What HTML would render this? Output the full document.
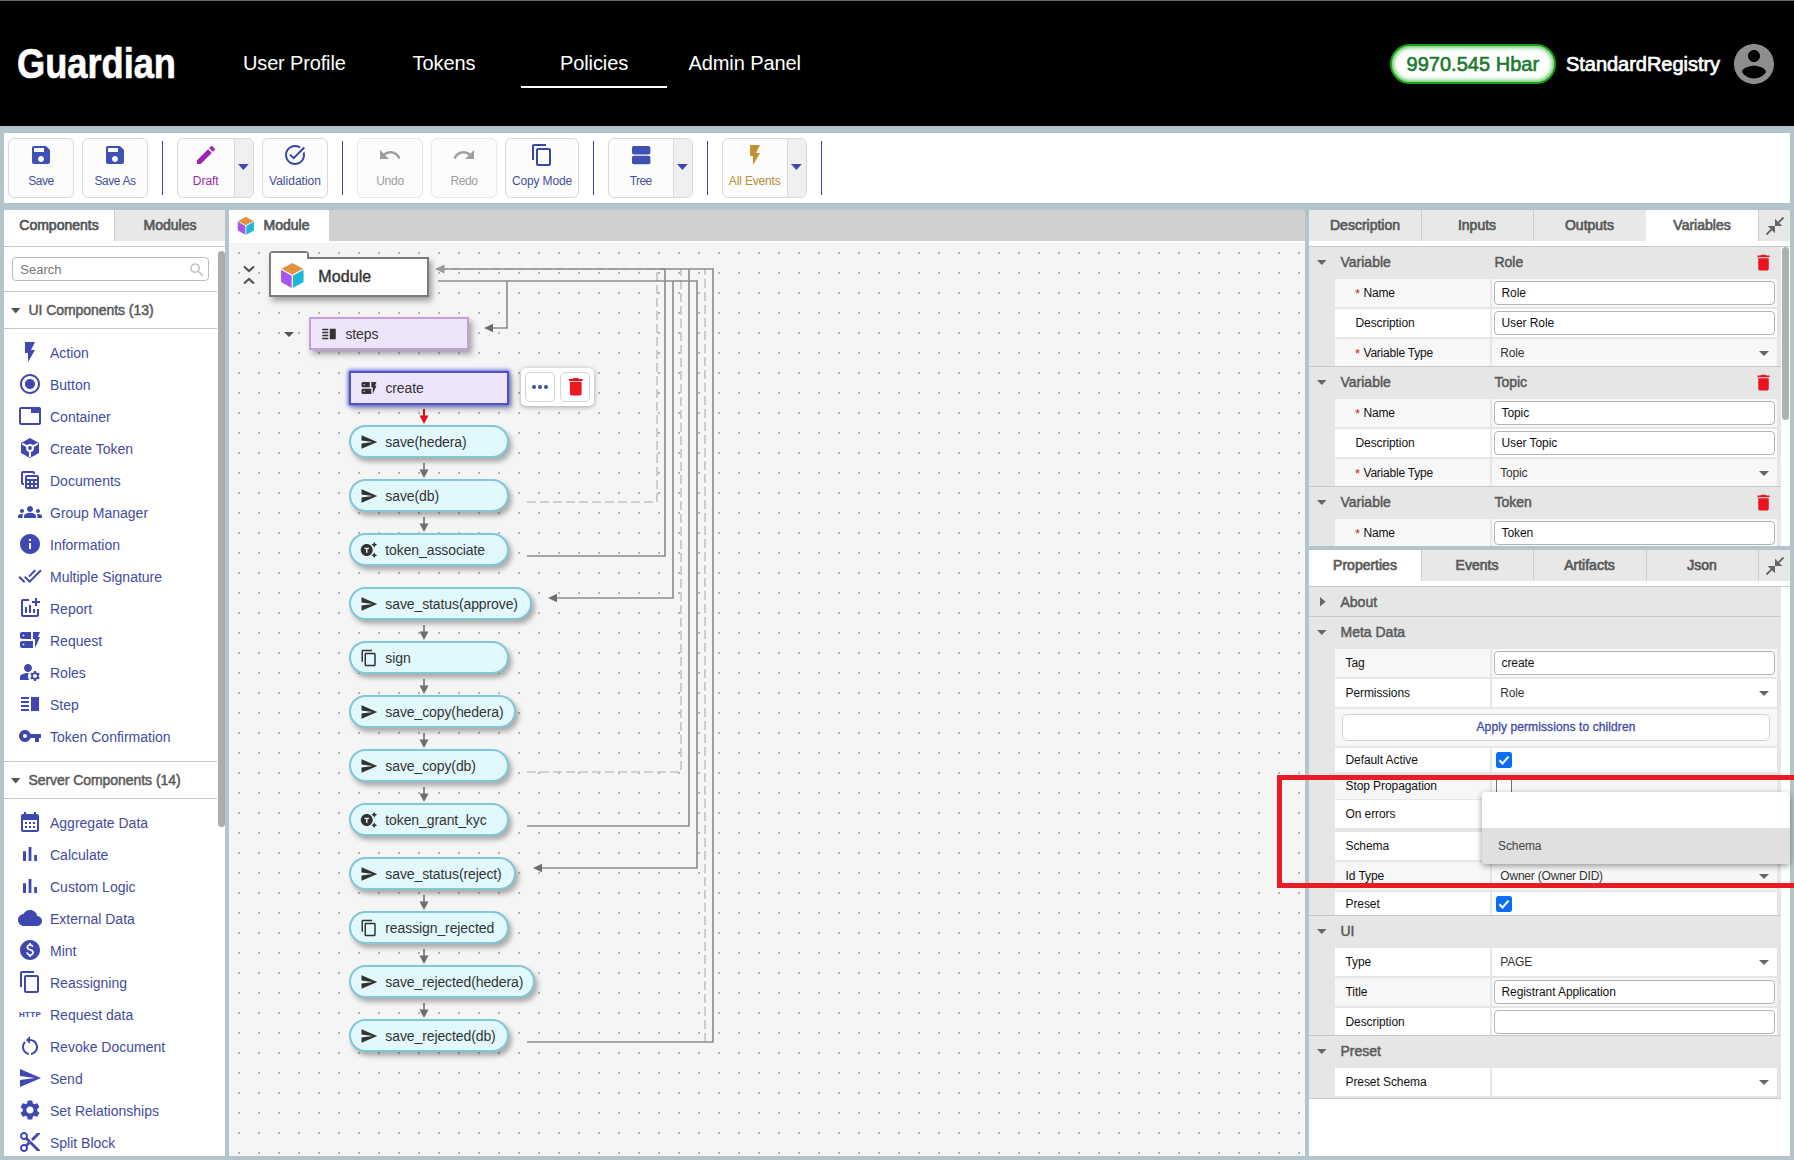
<!DOCTYPE html>
<html><head><meta charset="utf-8"><title>Guardian</title>
<style>
html,body{margin:0;padding:0}
body{width:1794px;height:1160px;position:relative;overflow:hidden;background:#b3c4cb;font-family:"Liberation Sans", sans-serif}
body div,body svg,.t{position:absolute}
.t{white-space:nowrap}
svg{display:block;overflow:visible}
</style></head><body>
<div style="left:0px;top:0px;width:1794px;height:126px;background:#000"></div>
<div style="left:0px;top:0px;width:1794px;height:1px;background:#6c6c70"></div>
<span class="t" style="top:40px;font-size:42.5px;line-height:47px;color:#fff;font-weight:bold;-webkit-text-stroke:0.7px #fff;transform:scaleX(0.852);transform-origin:0 0;left:17px;">Guardian</span>
<span class="t" style="top:52px;font-size:20px;line-height:22px;color:#fff;letter-spacing:-0.15px;left:243px;">User Profile</span>
<span class="t" style="top:52px;font-size:20px;line-height:22px;color:#fff;letter-spacing:-0.1px;left:412.6px;">Tokens</span>
<span class="t" style="top:52px;font-size:20px;line-height:22px;color:#fff;letter-spacing:-0.1px;left:560px;">Policies</span>
<span class="t" style="top:52px;font-size:20px;line-height:22px;color:#fff;letter-spacing:-0.1px;left:688.5px;">Admin Panel</span>
<div style="left:521px;top:86px;width:146px;height:2px;background:#fff"></div>
<div style="left:1390px;top:44px;width:166px;height:40px;box-sizing:border-box;border:2px solid #15a215;border-radius:20px;background:#fff;box-shadow:inset 0 0 5px 1px #3db83d"></div>
<span class="t" style="top:53px;font-size:20px;line-height:22px;color:#1b7a2e;letter-spacing:0.03px;-webkit-text-stroke:0.6px #1b7a2e;left:1406.5px;">9970.545 Hbar</span>
<span class="t" style="top:53px;font-size:20px;line-height:22px;color:#fff;letter-spacing:-0.03px;-webkit-text-stroke:0.7px #fff;left:1566px;">StandardRegistry</span>
<svg style="left:1730px;top:40px;" width="48" height="48" viewBox="0 0 24 24"><path fill="#8e8e8e" d="M12 2C6.480 2 2 6.480 2 12s4.480 10 10 10 10-4.480 10-10S17.520 2 12 2zm0 3c1.660 0 3 1.340 3 3s-1.340 3-3 3-3-1.340-3-3 1.340-3 3-3zm0 14.200c-2.500 0-4.710-1.280-6-3.220.030-1.990 4-3.080 6-3.080 1.990 0 5.970 1.090 6 3.080-1.290 1.940-3.500 3.220-6 3.220z"/></svg>
<div style="left:4px;top:133px;width:1786px;height:70px;background:#fff"></div>
<div style="left:8px;top:138px;width:66px;height:60px;box-sizing:border-box;border:1px solid #d9d9d9;border-radius:6px;background:#fcfcfc;overflow:hidden"></div>
<svg style="left:29.0px;top:143px;" width="24" height="24" viewBox="0 0 24 24"><path fill="#3f51b5" d="M17 3H5c-1.11 0-2 .9-2 2v14c0 1.1.89 2 2 2h14c1.1 0 2-.9 2-2V7l-4-4zm-5 16c-1.66 0-3-1.34-3-3s1.34-3 3-3 3 1.34 3 3-1.34 3-3 3zm3-10H5V5h10v4z"/></svg>
<span class="t" style="top:174px;font-size:12px;line-height:14px;color:#454e9c;letter-spacing:-0.45px;left:41.0px;transform:translateX(-50%);">Save</span>
<div style="left:82px;top:138px;width:66px;height:60px;box-sizing:border-box;border:1px solid #d9d9d9;border-radius:6px;background:#fcfcfc;overflow:hidden"></div>
<svg style="left:103.0px;top:143px;" width="24" height="24" viewBox="0 0 24 24"><path fill="#3f51b5" d="M17 3H5c-1.11 0-2 .9-2 2v14c0 1.1.89 2 2 2h14c1.1 0 2-.9 2-2V7l-4-4zm-5 16c-1.66 0-3-1.34-3-3s1.34-3 3-3 3 1.34 3 3-1.34 3-3 3zm3-10H5V5h10v4z"/></svg>
<span class="t" style="top:174px;font-size:12px;line-height:14px;color:#454e9c;letter-spacing:-0.41px;left:115.0px;transform:translateX(-50%);">Save As</span>
<div style="left:162px;top:141px;width:1.4px;height:54px;background:#3b4897"></div>
<div style="left:177px;top:138px;width:77px;height:60px;box-sizing:border-box;border:1px solid #d9d9d9;border-radius:6px;background:#fcfcfc;overflow:hidden"><div style="left:55.9px;top:0;width:19.5px;height:60px;background:#efefef;border-left:1px solid #d9d9d9"></div></div>
<svg style="left:193.75px;top:143px;" width="24" height="24" viewBox="0 0 24 24"><path fill="#9c27b0" d="M3 17.25V21h3.75L17.81 9.94l-3.75-3.75L3 17.25zM20.71 7.04c.39-.39.39-1.02 0-1.41l-2.34-2.34c-.39-.39-1.02-.39-1.41 0l-1.83 1.83 3.75 3.75 1.83-1.83z"/></svg>
<span class="t" style="top:174px;font-size:12px;line-height:14px;color:#9c2aa8;letter-spacing:-0.05px;left:205.75px;transform:translateX(-50%);">Draft</span>
<svg style="left:238.04999999999998px;top:164.2px;" width="10.8" height="6" viewBox="0 0 10.8 6"><path fill="#3f48b0" d="M0 0h10.8l-5.4 6z"/></svg>
<div style="left:262px;top:138px;width:66px;height:60px;box-sizing:border-box;border:1px solid #d9d9d9;border-radius:6px;background:#fcfcfc;overflow:hidden"></div>
<svg style="left:283.0px;top:143px;" width="24" height="24" viewBox="0 0 24 24"><path fill="#3848a4" d="M22 5.18L10.59 16.6l-4.24-4.24 1.41-1.41 2.83 2.83 10-10L22 5.18zm-2.21 5.04c.13.57.21 1.17.21 1.78 0 4.42-3.58 8-8 8s-8-3.58-8-8 3.58-8 8-8c1.58 0 3.04.46 4.28 1.25l1.44-1.44C16.1 2.67 14.13 2 12 2 6.48 2 2 6.48 2 12s4.48 10 10 10 10-4.48 10-10c0-1.19-.22-2.33-.6-3.39l-1.61 1.61z"/></svg>
<span class="t" style="top:174px;font-size:12px;line-height:14px;color:#454e9c;left:295.0px;transform:translateX(-50%);">Validation</span>
<div style="left:342px;top:141px;width:1.4px;height:54px;background:#3b4897"></div>
<div style="left:357px;top:138px;width:66px;height:60px;box-sizing:border-box;border:1px solid #e6e6e6;border-radius:6px;background:#fcfcfc;overflow:hidden"></div>
<svg style="left:378.0px;top:143px;" width="24" height="24" viewBox="0 0 24 24"><path fill="#9e9e9e" d="M12.5 8c-2.65 0-5.05.99-6.9 2.6L2 7v9h9l-3.62-3.62c1.39-1.16 3.16-1.88 5.12-1.88 3.54 0 6.55 2.31 7.6 5.5l2.37-.78C21.08 11.03 17.15 8 12.5 8z"/></svg>
<span class="t" style="top:174px;font-size:12px;line-height:14px;color:#9e9e9e;letter-spacing:-0.27px;left:390.0px;transform:translateX(-50%);">Undo</span>
<div style="left:431px;top:138px;width:66px;height:60px;box-sizing:border-box;border:1px solid #e6e6e6;border-radius:6px;background:#fcfcfc;overflow:hidden"></div>
<svg style="left:452.0px;top:143px;" width="24" height="24" viewBox="0 0 24 24"><path fill="#9e9e9e" d="M18.4 10.6C16.55 8.99 14.15 8 11.5 8c-4.65 0-8.58 3.03-9.96 7.22L3.9 16c1.05-3.19 4.05-5.5 7.6-5.5 1.95 0 3.73.72 5.12 1.88L13 16h9V7l-3.6 3.6z"/></svg>
<span class="t" style="top:174px;font-size:12px;line-height:14px;color:#9e9e9e;letter-spacing:-0.48px;left:464.0px;transform:translateX(-50%);">Redo</span>
<div style="left:505px;top:138px;width:74px;height:60px;box-sizing:border-box;border:1px solid #d9d9d9;border-radius:6px;background:#fcfcfc;overflow:hidden"></div>
<svg style="left:530.0px;top:143px;" width="24" height="24" viewBox="0 0 24 24"><path fill="#3848a4" d="M16 1H4c-1.1 0-2 .9-2 2v14h2V3h12V1zm3 4H8c-1.1 0-2 .9-2 2v14c0 1.1.9 2 2 2h11c1.1 0 2-.9 2-2V7c0-1.1-.9-2-2-2zm0 16H8V7h11v14z"/></svg>
<span class="t" style="top:174px;font-size:12px;line-height:14px;color:#454e9c;letter-spacing:-0.17px;left:542.0px;transform:translateX(-50%);">Copy Mode</span>
<div style="left:593px;top:141px;width:1.4px;height:54px;background:#3b4897"></div>
<div style="left:608px;top:138px;width:85px;height:60px;box-sizing:border-box;border:1px solid #d9d9d9;border-radius:6px;background:#fcfcfc;overflow:hidden"><div style="left:63.9px;top:0;width:19.5px;height:60px;background:#efefef;border-left:1px solid #d9d9d9"></div></div>
<svg style="left:631.55px;top:146.2px;" width="18.4" height="18.2" viewBox="0 0 18.4 18.2"><rect width="18.4" height="8.4" rx="2" fill="#3f51b5"/><rect y="9.8" width="18.4" height="8.4" rx="2" fill="#3f51b5"/></svg>
<span class="t" style="top:174px;font-size:12px;line-height:14px;color:#454e9c;letter-spacing:-0.6px;left:640.75px;transform:translateX(-50%);">Tree</span>
<svg style="left:677.0500000000001px;top:164.2px;" width="10.8" height="6" viewBox="0 0 10.8 6"><path fill="#3f48b0" d="M0 0h10.8l-5.4 6z"/></svg>
<div style="left:707px;top:141px;width:1.4px;height:54px;background:#3b4897"></div>
<div style="left:722px;top:138px;width:85px;height:60px;box-sizing:border-box;border:1px solid #d9d9d9;border-radius:6px;background:#fcfcfc;overflow:hidden"><div style="left:63.9px;top:0;width:19.5px;height:60px;background:#efefef;border-left:1px solid #d9d9d9"></div></div>
<svg style="left:742.75px;top:143px;" width="24" height="24" viewBox="0 0 24 24"><path fill="#c0912f" d="M7 2v11h3v9l7-12h-4l4-8z"/></svg>
<span class="t" style="top:174px;font-size:12px;line-height:14px;color:#b98d33;letter-spacing:-0.16px;left:754.75px;transform:translateX(-50%);">All Events</span>
<svg style="left:791.0500000000001px;top:164.2px;" width="10.8" height="6" viewBox="0 0 10.8 6"><path fill="#3f48b0" d="M0 0h10.8l-5.4 6z"/></svg>
<div style="left:821px;top:141px;width:1.4px;height:54px;background:#3b4897"></div>
<div style="left:4px;top:210px;width:221px;height:946px;background:#fff"></div>
<div style="left:114px;top:210px;width:111px;height:30.7px;background:#e8e8e8;border-left:1px solid #cfcfcf;box-sizing:border-box"></div>
<span class="t" style="top:217px;font-size:14px;line-height:16px;color:#555;-webkit-text-stroke:0.7px #555;left:59px;transform:translateX(-50%);">Components</span>
<span class="t" style="top:217px;font-size:14px;line-height:16px;color:#5a5a5a;-webkit-text-stroke:0.7px #5a5a5a;left:170px;transform:translateX(-50%);">Modules</span>
<div style="left:4px;top:246px;width:221px;height:1px;background:#c8c8c8"></div>
<div style="left:12px;top:257px;width:197px;height:24px;box-sizing:border-box;border:1px solid #bdbdbd;border-radius:4px;background:#fff"></div>
<span class="t" style="top:262px;font-size:13px;line-height:15px;color:#777;left:20.3px;">Search</span>
<svg style="left:188px;top:260.7px;" width="18" height="18" viewBox="0 0 24 24"><path fill="#c2c2c2" d="M15.500 14h-.790l-.280-.270C15.410 12.590 16 11.110 16 9.500 16 5.910 13.090 3 9.500 3S3 5.910 3 9.500 5.910 16 9.500 16c1.610 0 3.090-.590 4.230-1.570l.270.280v.790l5 4.990L20.490 19l-4.990-5zm-6 0C7.010 14 5 11.990 5 9.500S7.010 5 9.500 5 14 7.010 14 9.500 11.990 14 9.500 14z"/></svg>
<div style="left:4px;top:291px;width:213px;height:1px;background:#c8c8c8"></div>
<svg style="left:11.3px;top:307.9px;" width="9.4" height="5.6" viewBox="0 0 9.4 5.6"><path fill="#555" d="M0 0h9.4l-4.7 5.6z"/></svg>
<span class="t" style="top:302px;font-size:14px;line-height:16px;color:#5a5a5a;letter-spacing:-0.05px;-webkit-text-stroke:0.5px #5a5a5a;left:28.4px;">UI Components (13)</span>
<div style="left:4px;top:328px;width:213px;height:1px;background:#c8c8c8"></div>
<div style="left:217.5px;top:251px;width:7.3px;height:576px;background:#adadad;border-radius:4px"></div>
<svg style="left:18px;top:340px;" width="24" height="24" viewBox="0 0 24 24"><path fill="#3f48b0" d="M7 2v11h3v9l7-12h-4l4-8z"/></svg>
<span class="t" style="top:345px;font-size:14px;line-height:16px;color:#434b9f;left:50px;">Action</span>
<svg style="left:18px;top:372px;" width="24" height="24" viewBox="0 0 24 24"><path fill="#3f48b0" d="M12 7c-2.76 0-5 2.24-5 5s2.24 5 5 5 5-2.24 5-5-2.24-5-5-5zm0-5C6.48 2 2 6.48 2 12s4.48 10 10 10 10-4.480 10-10S17.520 2 12 2zm0 18c-4.420 0-8-3.580-8-8s3.580-8 8-8 8 3.580 8 8-3.580 8-8 8z"/></svg>
<span class="t" style="top:377px;font-size:14px;line-height:16px;color:#434b9f;left:50px;">Button</span>
<svg style="left:18px;top:404px;" width="24" height="24" viewBox="0 0 24 24"><path fill="#3f48b0" d="M21 3H3c-1.1 0-2 .9-2 2v14c0 1.1.9 2 2 2h18c1.1 0 2-.9 2-2V5c0-1.1-.9-2-2-2zm0 16H3V5h10v4h8v10z"/></svg>
<span class="t" style="top:409px;font-size:14px;line-height:16px;color:#434b9f;left:50px;">Container</span>
<svg style="left:18px;top:436px;" width="24" height="24" viewBox="0 0 24 24"><path fill="#3f48b0" d="M21 7l-9-5-9 5v10l9 5 9-5V7z"/><path d="M12 12 L4.2 7.65 M12 12 L19.8 7.65 M12 12 V21" stroke="#fff" stroke-width="2" fill="none"/><circle cx="12" cy="12" r="3.9" fill="#fff"/><circle cx="12" cy="12" r="1.9" fill="#3f48b0"/></svg>
<span class="t" style="top:441px;font-size:14px;line-height:16px;color:#434b9f;left:50px;">Create Token</span>
<svg style="left:18px;top:468px;" width="24" height="24" viewBox="0 0 24 24"><path fill="#3f48b0" d="M19 7H9c-1.1 0-2 .9-2 2v10c0 1.1.9 2 2 2h10c1.1 0 2-.9 2-2V9c0-1.1-.9-2-2-2zm0 2v2H9V9h10zm-6 6v-2h2v2h-2zm2 2v2h-2v-2h2zm-4-2H9v-2h2v2zm6-2h2v2h-2v-2zm-8 4h2v2H9v-2zm8 2v-2h2v2h-2zM6 17H5c-1.1 0-2-.9-2-2V5c0-1.1.9-2 2-2h10c1.1 0 2 .9 2 2v1h-2V5H5v10h1v2z"/></svg>
<span class="t" style="top:473px;font-size:14px;line-height:16px;color:#434b9f;left:50px;">Documents</span>
<svg style="left:18px;top:500px;" width="24" height="24" viewBox="0 0 24 24"><path fill="#3f48b0" d="M12 12.750c1.630 0 3.070.390 4.240.900 1.080.480 1.760 1.560 1.760 2.730V18H6v-1.610c0-1.180.680-2.260 1.760-2.730 1.170-.520 2.610-.910 4.240-.910zM4 13c1.100 0 2-.900 2-2s-.900-2-2-2-2 .900-2 2 .900 2 2 2zm1.130 1.100c-.370-.060-.740-.100-1.130-.100-.990 0-1.930.210-2.780.580C.480 14.900 0 15.620 0 16.430V18h4.500v-1.610c0-.830.230-1.610.630-2.290zM20 13c1.100 0 2-.900 2-2s-.900-2-2-2-2 .900-2 2 .900 2 2 2zm4 3.430c0-.810-.480-1.530-1.220-1.850-.850-.370-1.790-.580-2.780-.580-.390 0-.760.040-1.130.100.400.680.630 1.460.630 2.290V18H24v-1.570zM12 6c1.660 0 3 1.340 3 3s-1.340 3-3 3-3-1.340-3-3 1.340-3 3-3z"/></svg>
<span class="t" style="top:505px;font-size:14px;line-height:16px;color:#434b9f;left:50px;">Group Manager</span>
<svg style="left:18px;top:532px;" width="24" height="24" viewBox="0 0 24 24"><path fill="#3f48b0" d="M12 2C6.480 2 2 6.480 2 12s4.480 10 10 10 10-4.480 10-10S17.520 2 12 2zm1 15h-2v-6h2v6zm0-8h-2V7h2v2z"/></svg>
<span class="t" style="top:537px;font-size:14px;line-height:16px;color:#434b9f;left:50px;">Information</span>
<svg style="left:18px;top:564px;" width="24" height="24" viewBox="0 0 24 24"><path fill="#3f48b0" d="M18 7l-1.410-1.410-6.340 6.340 1.410 1.410L18 7zm4.240-1.410L11.660 16.170 7.480 12l-1.410 1.410L11.660 19l12-12-1.420-1.410zM.410 13.410L6 19l1.410-1.410L1.830 12 .410 13.410z"/></svg>
<span class="t" style="top:569px;font-size:14px;line-height:16px;color:#434b9f;left:50px;">Multiple Signature</span>
<svg style="left:18px;top:596px;" width="24" height="24" viewBox="0 0 24 24"><path fill="#3f48b0" d="M22 5v2h-3v3h-2V7h-3V5h3V2h2v3h3zm-3 14H5V5h6V3H5c-1.100 0-2 .900-2 2v14c0 1.100.900 2 2 2h14c1.100 0 2-.900 2-2v-6h-2v6zm-4-6v4h2v-4h-2zm-4 4h2V9h-2v8zm-2 0v-6H7v6h2z"/></svg>
<span class="t" style="top:601px;font-size:14px;line-height:16px;color:#434b9f;left:50px;">Report</span>
<svg style="left:18px;top:628px;" width="24" height="24" viewBox="0 0 24 24"><path fill="#3f48b0" d="M17 20v-9h-2V4h7l-2 5h2l-5 11zm-2-7v7H4c-1.100 0-2-.900-2-2v-3c0-1.100.900-2 2-2h11zm-8.750 2.750h-1.500v1.500h1.500v-1.500zM13 4v7H4c-1.100 0-2-.900-2-2V6c0-1.100.900-2 2-2h9zM6.250 6.750h-1.500v1.500h1.500v-1.500z"/></svg>
<span class="t" style="top:633px;font-size:14px;line-height:16px;color:#434b9f;left:50px;">Request</span>
<svg style="left:18px;top:660px;" width="24" height="24" viewBox="0 0 24 24"><path fill="#3f48b0" d="M10 12c2.210 0 4-1.790 4-4s-1.790-4-4-4-4 1.790-4 4 1.790 4 4 4zM10.670 13.020C10.450 13.010 10.230 13 10 13c-2.420 0-4.680.67-6.610 1.820C2.510 15.340 2 16.320 2 17.350V20h9.260c-.79-1.130-1.260-2.510-1.260-4 0-1.070.25-2.070.67-2.980zM20.750 16c0-.22-.03-.42-.06-.63l1.140-1.010-1-1.730-1.450.49c-.32-.27-.68-.48-1.080-.63L18 11h-2l-.3 1.490c-.4.150-.76.360-1.080.63l-1.450-.49-1 1.730 1.140 1.010c-.03.210-.06.410-.06.630s.03.420.06.630l-1.140 1.010 1 1.730 1.450-.49c.32.270.68.480 1.080.63L16 21h2l.3-1.490c.4-.150.76-.360 1.080-.63l1.450.49 1-1.730-1.140-1.010c.03-.21.06-.41.06-.63zM17 18c-1.100 0-2-.9-2-2s.9-2 2-2 2 .9 2 2-.9 2-2 2z"/></svg>
<span class="t" style="top:665px;font-size:14px;line-height:16px;color:#434b9f;left:50px;">Roles</span>
<svg style="left:18px;top:692px;" width="24" height="24" viewBox="0 0 24 24"><path fill="#3f48b0" d="M3 15h8v-2H3v2zm0 4h8v-2H3v2zm0-8h8V9H3v2zm0-6v2h8V5H3zm10 0h8v14h-8V5z"/></svg>
<span class="t" style="top:697px;font-size:14px;line-height:16px;color:#434b9f;left:50px;">Step</span>
<svg style="left:18px;top:724px;" width="24" height="24" viewBox="0 0 24 24"><path fill="#3f48b0" d="M12.650 10C11.830 7.670 9.610 6 7 6c-3.310 0-6 2.690-6 6s2.690 6 6 6c2.610 0 4.830-1.670 5.650-4H17v4h4v-4h2v-4H12.650zM7 14c-1.100 0-2-.900-2-2s.900-2 2-2 2 .900 2 2-.900 2-2 2z"/></svg>
<span class="t" style="top:729px;font-size:14px;line-height:16px;color:#434b9f;left:50px;">Token Confirmation</span>
<div style="left:4px;top:761px;width:213px;height:1px;background:#c8c8c8"></div>
<svg style="left:11.3px;top:778.0px;" width="9.4" height="5.6" viewBox="0 0 9.4 5.6"><path fill="#555" d="M0 0h9.4l-4.7 5.6z"/></svg>
<span class="t" style="top:772px;font-size:14px;line-height:16px;color:#5a5a5a;letter-spacing:-0.05px;-webkit-text-stroke:0.5px #5a5a5a;left:28.4px;">Server Components (14)</span>
<div style="left:4px;top:798px;width:213px;height:1px;background:#c8c8c8"></div>
<svg style="left:18px;top:810px;" width="24" height="24" viewBox="0 0 24 24"><path fill="#3f48b0" d="M19 4h-1V2h-2v2H8V2H6v2H5c-1.110 0-1.990.900-1.990 2L3 20c0 1.100.890 2 2 2h14c1.100 0 2-.900 2-2V6c0-1.100-.900-2-2-2zm0 16H5V10h14v10zM9 14H7v-2h2v2zm4 0h-2v-2h2v2zm4 0h-2v-2h2v2zm-8 4H7v-2h2v2zm4 0h-2v-2h2v2zm4 0h-2v-2h2v2z"/></svg>
<span class="t" style="top:815px;font-size:14px;line-height:16px;color:#434b9f;left:50px;">Aggregate Data</span>
<svg style="left:18px;top:842px;" width="24" height="24" viewBox="0 0 24 24"><path fill="#3f48b0" d="M5 9.200h3V19H5zM10.600 5h2.800v14h-2.800zm5.600 8H19v6h-2.800z"/></svg>
<span class="t" style="top:847px;font-size:14px;line-height:16px;color:#434b9f;left:50px;">Calculate</span>
<svg style="left:18px;top:874px;" width="24" height="24" viewBox="0 0 24 24"><path fill="#3f48b0" d="M5 9.200h3V19H5zM10.600 5h2.800v14h-2.800zm5.600 8H19v6h-2.800z"/></svg>
<span class="t" style="top:879px;font-size:14px;line-height:16px;color:#434b9f;left:50px;">Custom Logic</span>
<svg style="left:18px;top:906px;" width="24" height="24" viewBox="0 0 24 24"><path fill="#3f48b0" d="M19.350 10.040C18.670 6.590 15.640 4 12 4 9.110 4 6.600 5.640 5.350 8.040 2.340 8.360 0 10.910 0 14c0 3.310 2.690 6 6 6h13c2.760 0 5-2.240 5-5 0-2.640-2.050-4.780-4.650-4.960z"/></svg>
<span class="t" style="top:911px;font-size:14px;line-height:16px;color:#434b9f;left:50px;">External Data</span>
<svg style="left:18px;top:938px;" width="24" height="24" viewBox="0 0 24 24"><path fill="#3f48b0" d="M12 2C6.480 2 2 6.480 2 12s4.480 10 10 10 10-4.480 10-10S17.520 2 12 2zm.880 15.760V19h-1.750v-1.290c-.740-.180-2.390-.770-3.020-2.960l1.650-.670c.060.220.580 2.090 2.400 2.090.930 0 1.980-.480 1.980-1.610 0-.960-.700-1.460-2.280-2.030-1.100-.390-3.350-1.030-3.350-3.310 0-.100.010-2.400 2.620-2.960V5h1.750v1.240c1.840.320 2.510 1.790 2.660 2.230l-1.580.670c-.110-.350-.590-1.340-1.900-1.340-.700 0-1.810.370-1.810 1.390 0 .950.860 1.310 2.640 1.900 2.400.830 3.010 2.050 3.010 3.450 0 2.630-2.500 3.130-3.020 3.220z"/></svg>
<span class="t" style="top:943px;font-size:14px;line-height:16px;color:#434b9f;left:50px;">Mint</span>
<svg style="left:18px;top:970px;" width="24" height="24" viewBox="0 0 24 24"><path fill="#3f48b0" d="M16 1H4c-1.1 0-2 .9-2 2v14h2V3h12V1zm3 4H8c-1.1 0-2 .9-2 2v14c0 1.1.9 2 2 2h11c1.1 0 2-.9 2-2V7c0-1.1-.9-2-2-2zm0 16H8V7h11v14z"/></svg>
<span class="t" style="top:975px;font-size:14px;line-height:16px;color:#434b9f;left:50px;">Reassigning</span>
<span class="t" style="top:1010px;font-size:8px;line-height:9px;color:#3f48b0;font-weight:bold;letter-spacing:0.3px;left:30px;transform:translateX(-50%);">HTTP</span>
<span class="t" style="top:1007px;font-size:14px;line-height:16px;color:#434b9f;left:50px;">Request data</span>
<svg style="left:18px;top:1034px;" width="24" height="24" viewBox="0 0 24 24"><path fill="#3f48b0" d="M12 5V2L8 6l4 4V7c3.310 0 6 2.690 6 6 0 2.970-2.170 5.430-5 5.910v2.020c3.950-.490 7-3.850 7-7.930 0-4.420-3.580-8-8-8zM6 13c0-1.650.670-3.150 1.760-4.240L6.340 7.340C4.900 8.790 4 10.790 4 13c0 4.080 3.050 7.440 7 7.930v-2.020c-2.830-.480-5-2.940-5-5.910z"/></svg>
<span class="t" style="top:1039px;font-size:14px;line-height:16px;color:#434b9f;left:50px;">Revoke Document</span>
<svg style="left:18px;top:1066px;" width="24" height="24" viewBox="0 0 24 24"><path fill="#3f48b0" d="M2.010 21L23 12 2.010 3 2 10l15 2-15 2z"/></svg>
<span class="t" style="top:1071px;font-size:14px;line-height:16px;color:#434b9f;left:50px;">Send</span>
<svg style="left:18px;top:1098px;" width="24" height="24" viewBox="0 0 24 24"><path fill="#3f48b0" d="M19.140 12.940c.040-.300.060-.610.060-.940 0-.320-.020-.640-.070-.940l2.030-1.580c.180-.140.230-.410.120-.610l-1.920-3.320c-.120-.220-.370-.290-.590-.220l-2.390.960c-.500-.380-1.030-.700-1.620-.940l-.360-2.540c-.040-.240-.240-.410-.480-.410h-3.840c-.240 0-.430.170-.470.410l-.360 2.540c-.590.240-1.130.570-1.620.940l-2.390-.960c-.220-.080-.470 0-.590.220L2.740 8.870c-.120.210-.080.470.120.610l2.030 1.580c-.050.300-.090.630-.090.940s.020.640.070.940l-2.030 1.580c-.180.140-.230.410-.120.610l1.920 3.320c.120.220.370.290.590.220l2.390-.960c.500.380 1.030.700 1.620.940l.360 2.540c.050.240.240.410.480.410h3.840c.240 0 .440-.170.470-.410l.360-2.540c.590-.240 1.130-.560 1.620-.940l2.390.960c.220.080.470 0 .590-.220l1.920-3.320c.120-.220.070-.470-.120-.610l-2.010-1.580zM12 15.600c-1.980 0-3.600-1.620-3.600-3.600s1.620-3.600 3.600-3.600 3.600 1.620 3.600 3.600-1.620 3.600-3.600 3.600z"/></svg>
<span class="t" style="top:1103px;font-size:14px;line-height:16px;color:#434b9f;left:50px;">Set Relationships</span>
<svg style="left:18px;top:1130px;" width="24" height="24" viewBox="0 0 24 24"><path fill="#3f48b0" d="M9.640 7.640c.230-.500.360-1.050.360-1.640 0-2.210-1.790-4-4-4S2 3.790 2 6s1.790 4 4 4c.590 0 1.140-.130 1.640-.360L10 12l-2.360 2.360C7.140 14.130 6.590 14 6 14c-2.210 0-4 1.790-4 4s1.790 4 4 4 4-1.790 4-4c0-.590-.130-1.140-.360-1.640L12 14l7 7h3v-1L9.640 7.640zM6 8c-1.100 0-2-.890-2-2s.900-2 2-2 2 .890 2 2-.900 2-2 2zm0 12c-1.100 0-2-.890-2-2s.900-2 2-2 2 .890 2 2-.900 2-2 2zm6-7.500c-.280 0-.500-.220-.500-.500s.220-.500.500-.500.500.220.500.500-.220.500-.500.500zM19 3l-6 6 2 2 7-7V3h-3z"/></svg>
<span class="t" style="top:1135px;font-size:14px;line-height:16px;color:#434b9f;left:50px;">Split Block</span>
<div style="left:229px;top:210px;width:1076px;height:946px;background:#f5f5f5"></div>
<svg style="left:229px;top:240px;" width="1076" height="916" viewBox="0 0 1076 916"><defs><pattern id="dots" width="20" height="20" patternUnits="userSpaceOnUse"><rect x="9" y="12" width="2" height="2" fill="#b4b4b4"/></pattern></defs><rect width="1076" height="916" fill="url(#dots)"/></svg>
<div style="left:229px;top:210px;width:1076px;height:33px;background:#fff"></div>
<div style="left:329px;top:210px;width:976px;height:30.6px;background:#d0d0d0"></div>
<svg style="left:237.4px;top:216px;" width="17.7" height="19.5" viewBox="0 0 24 26.4"><path fill="#e0923c" d="M12 1 L22.5 6.6 L12 12.4 L1.5 6.6z"/><path fill="#a855f0" d="M1 7.6 L11.4 13.4 L11.4 25.4 L1 19.6z"/><path fill="#1fb6d9" d="M23 7.6 L12.6 13.4 L12.6 25.4 L23 19.6z"/></svg>
<span class="t" style="top:217px;font-size:14px;line-height:16px;color:#555;-webkit-text-stroke:0.7px #555;left:263.5px;">Module</span>
<svg style="left:229px;top:240px;" width="1076" height="916" viewBox="229 240 1076 916"><path d="M527 502 H657 V269 H444" fill="none" stroke="#c4c4c4" stroke-width="1.6" stroke-dasharray="9 4"/><path d="M527 772 H681 V269" fill="none" stroke="#c4c4c4" stroke-width="1.6" stroke-dasharray="9 4"/><path d="M705 1042 V269" fill="none" stroke="#c4c4c4" stroke-width="1.6" stroke-dasharray="9 4"/><path d="M527 556 H665 V269 H444" fill="none" stroke="#8c8c8c" stroke-width="1.6"/><path d="M527 826 H689 V269" fill="none" stroke="#8c8c8c" stroke-width="1.6"/><path d="M527 1042 H713 V269 H660" fill="none" stroke="#8c8c8c" stroke-width="1.6"/><path d="M438 281 H697 V868 H541" fill="none" stroke="#8c8c8c" stroke-width="1.6"/><path d="M673 281 V598 H556" fill="none" stroke="#8c8c8c" stroke-width="1.6"/><path d="M507 281 V328 H492" fill="none" stroke="#8c8c8c" stroke-width="1.6"/><path d="M435 269 l9.5 -4.6 v9.2z" fill="#9a9a9a"/><path d="M484 328 l9 -4.3 v8.6z" fill="#6e6e6e"/><path d="M548 598 l9 -4.3 v8.6z" fill="#6e6e6e"/><path d="M533 868 l9 -4.3 v8.6z" fill="#6e6e6e"/><path d="M424 409 V419" stroke="#e0121a" stroke-width="2" fill="none"/><path d="M424 424 l-4.5 -8.5 h9.0z" fill="#e0121a"/><path d="M424 463 V473" stroke="#6e6e6e" stroke-width="1.5" fill="none"/><path d="M424 478 l-4.5 -8.5 h9.0z" fill="#6e6e6e"/><path d="M424 517 V527" stroke="#6e6e6e" stroke-width="1.5" fill="none"/><path d="M424 532 l-4.5 -8.5 h9.0z" fill="#6e6e6e"/><path d="M424 625 V635" stroke="#6e6e6e" stroke-width="1.5" fill="none"/><path d="M424 640 l-4.5 -8.5 h9.0z" fill="#6e6e6e"/><path d="M424 679 V689" stroke="#6e6e6e" stroke-width="1.5" fill="none"/><path d="M424 694 l-4.5 -8.5 h9.0z" fill="#6e6e6e"/><path d="M424 733 V743" stroke="#6e6e6e" stroke-width="1.5" fill="none"/><path d="M424 748 l-4.5 -8.5 h9.0z" fill="#6e6e6e"/><path d="M424 787 V797" stroke="#6e6e6e" stroke-width="1.5" fill="none"/><path d="M424 802 l-4.5 -8.5 h9.0z" fill="#6e6e6e"/><path d="M424 895 V905" stroke="#6e6e6e" stroke-width="1.5" fill="none"/><path d="M424 910 l-4.5 -8.5 h9.0z" fill="#6e6e6e"/><path d="M424 949 V959" stroke="#6e6e6e" stroke-width="1.5" fill="none"/><path d="M424 964 l-4.5 -8.5 h9.0z" fill="#6e6e6e"/><path d="M424 1003 V1013" stroke="#6e6e6e" stroke-width="1.5" fill="none"/><path d="M424 1018 l-4.5 -8.5 h9.0z" fill="#6e6e6e"/></svg>
<div style="left:269px;top:251px;width:40px;height:10px;box-sizing:border-box;border:2px solid #7c7c7c;border-bottom:none;border-radius:4px 4px 0 0;background:#fff"></div>
<div style="left:269px;top:257px;width:160px;height:40px;box-sizing:border-box;border:2px solid #7c7c7c;background:#fff;box-shadow:3px 4px 6px rgba(0,0,0,.35);"></div>
<div style="left:271px;top:253px;width:36px;height:8px;background:#fff"></div>
<svg style="left:280.4px;top:262px;" width="24.6" height="27.1" viewBox="0 0 24 26.4"><path fill="#e0923c" d="M12 1 L22.5 6.6 L12 12.4 L1.5 6.6z"/><path fill="#a855f0" d="M1 7.6 L11.4 13.4 L11.4 25.4 L1 19.6z"/><path fill="#1fb6d9" d="M23 7.6 L12.6 13.4 L12.6 25.4 L23 19.6z"/></svg>
<span class="t" style="top:268px;font-size:16px;line-height:17px;color:#333;letter-spacing:0.1px;-webkit-text-stroke:0.4px #333;left:318.3px;">Module</span>
<svg style="left:242px;top:264px;" width="14" height="22" viewBox="0 0 14 22"><path d="M2 2.5 L7 7 L12 2.5 M2 19.5 L7 15 L12 19.5" fill="none" stroke="#555" stroke-width="2.2"/></svg>
<svg style="left:284.0px;top:331.8px;" width="10" height="5" viewBox="0 0 10 5"><path fill="#555" d="M0 0h10l-5.0 5z"/></svg>
<div style="left:309px;top:317px;width:160px;height:33px;box-sizing:border-box;border:2px solid #c49fe0;background:#efe5fa;box-shadow:3px 4px 6px rgba(0,0,0,.35);"></div>
<svg style="left:320px;top:324.5px;" width="18" height="18" viewBox="0 0 24 24"><path fill="#333" d="M3 15h8v-2H3v2zm0 4h8v-2H3v2zm0-8h8V9H3v2zm0-6v2h8V5H3zm10 0h8v14h-8V5z"/></svg>
<span class="t" style="top:326px;font-size:14px;line-height:16px;color:#333;letter-spacing:-0.1px;left:345.4px;">steps</span>
<div style="left:349px;top:371px;width:160px;height:33.5px;box-sizing:border-box;border:2px solid #4a52c4;background:#efe5fa;box-shadow:0 0 4px 1px #5b63d6, 3px 4px 6px rgba(0,0,0,.3)"></div>
<svg style="left:360px;top:378.5px;" width="18" height="18" viewBox="0 0 24 24"><path fill="#333" d="M17 20v-9h-2V4h7l-2 5h2l-5 11zm-2-7v7H4c-1.100 0-2-.900-2-2v-3c0-1.100.900-2 2-2h11zm-8.750 2.750h-1.500v1.500h1.500v-1.500zM13 4v7H4c-1.100 0-2-.900-2-2V6c0-1.100.900-2 2-2h9zM6.250 6.750h-1.500v1.500h1.500v-1.500z"/></svg>
<span class="t" style="top:380px;font-size:14px;line-height:16px;color:#333;letter-spacing:-0.1px;left:385.4px;">create</span>
<div style="left:521px;top:368px;width:73px;height:38px;background:#fff;border-radius:5px;box-shadow:0 1px 5px rgba(0,0,0,.35)"></div>
<div style="left:525px;top:372px;width:30px;height:30px;box-sizing:border-box;border:1px solid #d4d4d4;border-radius:5px;background:#fff"></div>
<div style="left:560px;top:372px;width:30px;height:30px;box-sizing:border-box;border:1px solid #d4d4d4;border-radius:5px;background:#fff"></div>
<svg style="left:531px;top:384px;" width="18" height="6" viewBox="0 0 18 6"><circle cx="3" cy="3" r="2" fill="#3f48b0"/><circle cx="9" cy="3" r="2" fill="#3f48b0"/><circle cx="15" cy="3" r="2" fill="#3f48b0"/></svg>
<svg style="left:563.5px;top:375.2px;" width="23.5" height="23.5" viewBox="0 0 24 24"><path fill="#ee1620" d="M6 19c0 1.100.900 2 2 2h8c1.100 0 2-.900 2-2V7H6v12zM19 4h-3.500l-1-1h-5l-1 1H5v2h14V4z"/></svg>
<div style="left:349px;top:425px;width:160px;height:33px;box-sizing:border-box;border:2px solid #82c6d8;border-radius:16.5px;background:#e1f8fc;box-shadow:3px 4px 5px rgba(0,0,0,.3)"></div>
<svg style="left:359.6px;top:433px;" width="18" height="18" viewBox="0 0 24 24"><path fill="#333" d="M2.010 21L23 12 2.010 3 2 10l15 2-15 2z"/></svg>
<span class="t" style="top:434px;font-size:14px;line-height:16px;color:#333;letter-spacing:-0.1px;left:385.3px;">save(hedera)</span>
<div style="left:349px;top:479px;width:160px;height:33px;box-sizing:border-box;border:2px solid #82c6d8;border-radius:16.5px;background:#e1f8fc;box-shadow:3px 4px 5px rgba(0,0,0,.3)"></div>
<svg style="left:359.6px;top:487px;" width="18" height="18" viewBox="0 0 24 24"><path fill="#333" d="M2.010 21L23 12 2.010 3 2 10l15 2-15 2z"/></svg>
<span class="t" style="top:488px;font-size:14px;line-height:16px;color:#333;letter-spacing:-0.1px;left:385.3px;">save(db)</span>
<div style="left:349px;top:533px;width:160px;height:33px;box-sizing:border-box;border:2px solid #82c6d8;border-radius:16.5px;background:#e1f8fc;box-shadow:3px 4px 5px rgba(0,0,0,.3)"></div>
<svg style="left:359.6px;top:541px;" width="18" height="18" viewBox="0 0 24 24"><path fill="#333" d="M9 4c-4.420 0-8 3.580-8 8s3.580 8 8 8 8-3.580 8-8-3.580-8-8-8zm3 6.500h-2v5H8v-5H6V9h6v1.500zm8.250-6.750L23 5l-2.750 1.250L19 9l-1.250-2.750L15 5l2.750-1.250L19 1l1.250 2.750zm0 14L23 19l-2.750 1.250L19 23l-1.250-2.750L15 19l2.750-1.250L19 15l1.250 2.750z"/></svg>
<span class="t" style="top:542px;font-size:14px;line-height:16px;color:#333;letter-spacing:-0.1px;left:385.3px;">token_associate</span>
<div style="left:349px;top:587px;width:183px;height:33px;box-sizing:border-box;border:2px solid #82c6d8;border-radius:16.5px;background:#e1f8fc;box-shadow:3px 4px 5px rgba(0,0,0,.3)"></div>
<svg style="left:359.6px;top:595px;" width="18" height="18" viewBox="0 0 24 24"><path fill="#333" d="M2.010 21L23 12 2.010 3 2 10l15 2-15 2z"/></svg>
<span class="t" style="top:596px;font-size:14px;line-height:16px;color:#333;letter-spacing:-0.1px;left:385.3px;">save_status(approve)</span>
<div style="left:349px;top:641px;width:160px;height:33px;box-sizing:border-box;border:2px solid #82c6d8;border-radius:16.5px;background:#e1f8fc;box-shadow:3px 4px 5px rgba(0,0,0,.3)"></div>
<svg style="left:359.6px;top:649px;" width="18" height="18" viewBox="0 0 24 24"><path fill="#333" d="M16 1H4c-1.1 0-2 .9-2 2v14h2V3h12V1zm3 4H8c-1.1 0-2 .9-2 2v14c0 1.1.9 2 2 2h11c1.1 0 2-.9 2-2V7c0-1.1-.9-2-2-2zm0 16H8V7h11v14z"/></svg>
<span class="t" style="top:650px;font-size:14px;line-height:16px;color:#333;letter-spacing:-0.1px;left:385.3px;">sign</span>
<div style="left:349px;top:695px;width:167px;height:33px;box-sizing:border-box;border:2px solid #82c6d8;border-radius:16.5px;background:#e1f8fc;box-shadow:3px 4px 5px rgba(0,0,0,.3)"></div>
<svg style="left:359.6px;top:703px;" width="18" height="18" viewBox="0 0 24 24"><path fill="#333" d="M2.010 21L23 12 2.010 3 2 10l15 2-15 2z"/></svg>
<span class="t" style="top:704px;font-size:14px;line-height:16px;color:#333;letter-spacing:-0.1px;left:385.3px;">save_copy(hedera)</span>
<div style="left:349px;top:749px;width:160px;height:33px;box-sizing:border-box;border:2px solid #82c6d8;border-radius:16.5px;background:#e1f8fc;box-shadow:3px 4px 5px rgba(0,0,0,.3)"></div>
<svg style="left:359.6px;top:757px;" width="18" height="18" viewBox="0 0 24 24"><path fill="#333" d="M2.010 21L23 12 2.010 3 2 10l15 2-15 2z"/></svg>
<span class="t" style="top:758px;font-size:14px;line-height:16px;color:#333;letter-spacing:-0.1px;left:385.3px;">save_copy(db)</span>
<div style="left:349px;top:803px;width:160px;height:33px;box-sizing:border-box;border:2px solid #82c6d8;border-radius:16.5px;background:#e1f8fc;box-shadow:3px 4px 5px rgba(0,0,0,.3)"></div>
<svg style="left:359.6px;top:811px;" width="18" height="18" viewBox="0 0 24 24"><path fill="#333" d="M9 4c-4.420 0-8 3.580-8 8s3.580 8 8 8 8-3.580 8-8-3.580-8-8-8zm3 6.500h-2v5H8v-5H6V9h6v1.500zm8.250-6.750L23 5l-2.750 1.250L19 9l-1.250-2.750L15 5l2.750-1.250L19 1l1.250 2.750zm0 14L23 19l-2.750 1.250L19 23l-1.250-2.750L15 19l2.750-1.250L19 15l1.250 2.750z"/></svg>
<span class="t" style="top:812px;font-size:14px;line-height:16px;color:#333;letter-spacing:-0.1px;left:385.3px;">token_grant_kyc</span>
<div style="left:349px;top:857px;width:167px;height:33px;box-sizing:border-box;border:2px solid #82c6d8;border-radius:16.5px;background:#e1f8fc;box-shadow:3px 4px 5px rgba(0,0,0,.3)"></div>
<svg style="left:359.6px;top:865px;" width="18" height="18" viewBox="0 0 24 24"><path fill="#333" d="M2.010 21L23 12 2.010 3 2 10l15 2-15 2z"/></svg>
<span class="t" style="top:866px;font-size:14px;line-height:16px;color:#333;letter-spacing:-0.1px;left:385.3px;">save_status(reject)</span>
<div style="left:349px;top:911px;width:160px;height:33px;box-sizing:border-box;border:2px solid #82c6d8;border-radius:16.5px;background:#e1f8fc;box-shadow:3px 4px 5px rgba(0,0,0,.3)"></div>
<svg style="left:359.6px;top:919px;" width="18" height="18" viewBox="0 0 24 24"><path fill="#333" d="M16 1H4c-1.1 0-2 .9-2 2v14h2V3h12V1zm3 4H8c-1.1 0-2 .9-2 2v14c0 1.1.9 2 2 2h11c1.1 0 2-.9 2-2V7c0-1.1-.9-2-2-2zm0 16H8V7h11v14z"/></svg>
<span class="t" style="top:920px;font-size:14px;line-height:16px;color:#333;letter-spacing:-0.1px;left:385.3px;">reassign_rejected</span>
<div style="left:349px;top:965px;width:186px;height:33px;box-sizing:border-box;border:2px solid #82c6d8;border-radius:16.5px;background:#e1f8fc;box-shadow:3px 4px 5px rgba(0,0,0,.3)"></div>
<svg style="left:359.6px;top:973px;" width="18" height="18" viewBox="0 0 24 24"><path fill="#333" d="M2.010 21L23 12 2.010 3 2 10l15 2-15 2z"/></svg>
<span class="t" style="top:974px;font-size:14px;line-height:16px;color:#333;letter-spacing:-0.1px;left:385.3px;">save_rejected(hedera)</span>
<div style="left:349px;top:1019px;width:160px;height:33px;box-sizing:border-box;border:2px solid #82c6d8;border-radius:16.5px;background:#e1f8fc;box-shadow:3px 4px 5px rgba(0,0,0,.3)"></div>
<svg style="left:359.6px;top:1027px;" width="18" height="18" viewBox="0 0 24 24"><path fill="#333" d="M2.010 21L23 12 2.010 3 2 10l15 2-15 2z"/></svg>
<span class="t" style="top:1028px;font-size:14px;line-height:16px;color:#333;letter-spacing:-0.1px;left:385.3px;">save_rejected(db)</span>
<div style="left:1309px;top:210px;width:481px;height:336px;background:#fff"></div>
<div style="left:1309px;top:210px;width:481px;height:31px;background:#e8e8e8"></div>
<div style="left:1421px;top:210px;width:1px;height:31px;background:#cdcdcd"></div>
<div style="left:1533px;top:210px;width:1px;height:31px;background:#cdcdcd"></div>
<div style="left:1646px;top:210px;width:1px;height:31px;background:#cdcdcd"></div>
<div style="left:1758px;top:210px;width:1px;height:31px;background:#cdcdcd"></div>
<span class="t" style="top:217px;font-size:14px;line-height:16px;color:#5a5a5a;-webkit-text-stroke:0.7px #5a5a5a;left:1365.0px;transform:translateX(-50%);">Description</span>
<span class="t" style="top:217px;font-size:14px;line-height:16px;color:#5a5a5a;-webkit-text-stroke:0.7px #5a5a5a;left:1477.0px;transform:translateX(-50%);">Inputs</span>
<span class="t" style="top:217px;font-size:14px;line-height:16px;color:#5a5a5a;-webkit-text-stroke:0.7px #5a5a5a;left:1589.5px;transform:translateX(-50%);">Outputs</span>
<div style="left:1646px;top:210px;width:112px;height:31px;background:#fff"></div>
<span class="t" style="top:217px;font-size:14px;line-height:16px;color:#5a5a5a;-webkit-text-stroke:0.7px #5a5a5a;left:1702.0px;transform:translateX(-50%);">Variables</span>
<svg style="left:1764px;top:215px;" width="22" height="22" viewBox="0 0 24 24"><path fill="#666" d="M22 3.410L16.710 8.700 20 12h-8V4l3.290 3.290L20.590 2 22 3.410zM3.410 22l5.290-5.290L12 20v-8H4l3.290 3.290L2 20.590 3.410 22z"/></svg>
<div style="left:1309px;top:246px;width:481px;height:1px;background:#c8c8c8"></div>
<div style="left:1309px;top:247px;width:472px;height:299px;background:#e6e6e6"></div>
<svg style="left:1317.4px;top:259.84999999999997px;" width="9.6" height="5.1" viewBox="0 0 9.6 5.1"><path fill="#666" d="M0 0h9.6l-4.8 5.1z"/></svg>
<span class="t" style="top:254px;font-size:14px;line-height:16px;color:#5a5a5a;-webkit-text-stroke:0.5px #5a5a5a;left:1340.5px;">Variable</span>
<span class="t" style="top:254px;font-size:14px;line-height:16px;color:#5a5a5a;-webkit-text-stroke:0.5px #5a5a5a;left:1494.4px;">Role</span>
<svg style="left:1752.6px;top:252.3px;" width="21" height="21" viewBox="0 0 24 24"><path fill="#e8141e" d="M6 19c0 1.100.900 2 2 2h8c1.100 0 2-.900 2-2V7H6v12zM19 4h-3.500l-1-1h-5l-1 1H5v2h14V4z"/></svg>
<div style="left:1335px;top:279px;width:155px;height:28px;background:#f7f7f7"></div>
<div style="left:1492px;top:279px;width:285px;height:28px;background:#f7f7f7"></div>
<span class="t" style="top:286px;font-size:13px;line-height:15px;color:#e0121a;left:1355px;">*</span>
<span class="t" style="top:286px;font-size:12px;line-height:14px;color:#111;letter-spacing:-0.22px;left:1363.5px;">Name</span>
<div style="left:1494px;top:281px;width:281px;height:24px;box-sizing:border-box;border:1px solid #b4b4b4;border-radius:4px;background:#fff"></div>
<span class="t" style="top:286px;font-size:12px;line-height:14px;color:#111;letter-spacing:-0.08px;left:1501.5px;">Role</span>
<div style="left:1335px;top:309px;width:155px;height:28px;background:#fff"></div>
<div style="left:1492px;top:309px;width:285px;height:28px;background:#fff"></div>
<span class="t" style="top:316px;font-size:12px;line-height:14px;color:#111;letter-spacing:-0.08px;left:1355.5px;">Description</span>
<div style="left:1494px;top:311px;width:281px;height:24px;box-sizing:border-box;border:1px solid #b4b4b4;border-radius:4px;background:#fff"></div>
<span class="t" style="top:316px;font-size:12px;line-height:14px;color:#111;letter-spacing:-0.08px;left:1501.5px;">User Role</span>
<div style="left:1335px;top:339px;width:155px;height:27px;background:#f7f7f7"></div>
<div style="left:1492px;top:339px;width:285px;height:27px;background:#f7f7f7"></div>
<span class="t" style="top:346px;font-size:13px;line-height:15px;color:#e0121a;left:1355px;">*</span>
<span class="t" style="top:346px;font-size:12px;line-height:14px;color:#111;letter-spacing:-0.22px;left:1363.5px;">Variable Type</span>
<span class="t" style="top:346px;font-size:12px;line-height:14px;color:#333;letter-spacing:-0.2px;left:1500.3px;">Role</span>
<svg style="left:1759.0px;top:351.0px;" width="10" height="5" viewBox="0 0 10 5"><path fill="#666" d="M0 0h10l-5.0 5z"/></svg>
<div style="left:1309px;top:366px;width:472px;height:1px;background:#c8c8c8"></div>
<svg style="left:1317.4px;top:379.84999999999997px;" width="9.6" height="5.1" viewBox="0 0 9.6 5.1"><path fill="#666" d="M0 0h9.6l-4.8 5.1z"/></svg>
<span class="t" style="top:374px;font-size:14px;line-height:16px;color:#5a5a5a;-webkit-text-stroke:0.5px #5a5a5a;left:1340.5px;">Variable</span>
<span class="t" style="top:374px;font-size:14px;line-height:16px;color:#5a5a5a;-webkit-text-stroke:0.5px #5a5a5a;left:1494.4px;">Topic</span>
<svg style="left:1752.6px;top:372.3px;" width="21" height="21" viewBox="0 0 24 24"><path fill="#e8141e" d="M6 19c0 1.100.900 2 2 2h8c1.100 0 2-.900 2-2V7H6v12zM19 4h-3.500l-1-1h-5l-1 1H5v2h14V4z"/></svg>
<div style="left:1335px;top:399px;width:155px;height:28px;background:#f7f7f7"></div>
<div style="left:1492px;top:399px;width:285px;height:28px;background:#f7f7f7"></div>
<span class="t" style="top:406px;font-size:13px;line-height:15px;color:#e0121a;left:1355px;">*</span>
<span class="t" style="top:406px;font-size:12px;line-height:14px;color:#111;letter-spacing:-0.22px;left:1363.5px;">Name</span>
<div style="left:1494px;top:401px;width:281px;height:24px;box-sizing:border-box;border:1px solid #b4b4b4;border-radius:4px;background:#fff"></div>
<span class="t" style="top:406px;font-size:12px;line-height:14px;color:#111;letter-spacing:-0.08px;left:1501.5px;">Topic</span>
<div style="left:1335px;top:429px;width:155px;height:28px;background:#fff"></div>
<div style="left:1492px;top:429px;width:285px;height:28px;background:#fff"></div>
<span class="t" style="top:436px;font-size:12px;line-height:14px;color:#111;letter-spacing:-0.08px;left:1355.5px;">Description</span>
<div style="left:1494px;top:431px;width:281px;height:24px;box-sizing:border-box;border:1px solid #b4b4b4;border-radius:4px;background:#fff"></div>
<span class="t" style="top:436px;font-size:12px;line-height:14px;color:#111;letter-spacing:-0.08px;left:1501.5px;">User Topic</span>
<div style="left:1335px;top:459px;width:155px;height:27px;background:#f7f7f7"></div>
<div style="left:1492px;top:459px;width:285px;height:27px;background:#f7f7f7"></div>
<span class="t" style="top:466px;font-size:13px;line-height:15px;color:#e0121a;left:1355px;">*</span>
<span class="t" style="top:466px;font-size:12px;line-height:14px;color:#111;letter-spacing:-0.22px;left:1363.5px;">Variable Type</span>
<span class="t" style="top:466px;font-size:12px;line-height:14px;color:#333;letter-spacing:-0.2px;left:1500.3px;">Topic</span>
<svg style="left:1759.0px;top:471.0px;" width="10" height="5" viewBox="0 0 10 5"><path fill="#666" d="M0 0h10l-5.0 5z"/></svg>
<div style="left:1309px;top:486px;width:472px;height:1px;background:#c8c8c8"></div>
<svg style="left:1317.4px;top:499.84999999999997px;" width="9.6" height="5.1" viewBox="0 0 9.6 5.1"><path fill="#666" d="M0 0h9.6l-4.8 5.1z"/></svg>
<span class="t" style="top:494px;font-size:14px;line-height:16px;color:#5a5a5a;-webkit-text-stroke:0.5px #5a5a5a;left:1340.5px;">Variable</span>
<span class="t" style="top:494px;font-size:14px;line-height:16px;color:#5a5a5a;-webkit-text-stroke:0.5px #5a5a5a;left:1494.4px;">Token</span>
<svg style="left:1752.6px;top:492.3px;" width="21" height="21" viewBox="0 0 24 24"><path fill="#e8141e" d="M6 19c0 1.100.900 2 2 2h8c1.100 0 2-.900 2-2V7H6v12zM19 4h-3.500l-1-1h-5l-1 1H5v2h14V4z"/></svg>
<div style="left:1335px;top:519px;width:155px;height:28px;background:#f7f7f7"></div>
<div style="left:1492px;top:519px;width:285px;height:28px;background:#f7f7f7"></div>
<span class="t" style="top:526px;font-size:13px;line-height:15px;color:#e0121a;left:1355px;">*</span>
<span class="t" style="top:526px;font-size:12px;line-height:14px;color:#111;letter-spacing:-0.22px;left:1363.5px;">Name</span>
<div style="left:1494px;top:521px;width:281px;height:24px;box-sizing:border-box;border:1px solid #b4b4b4;border-radius:4px;background:#fff"></div>
<span class="t" style="top:526px;font-size:12px;line-height:14px;color:#111;letter-spacing:-0.08px;left:1501.5px;">Token</span>
<div style="left:1309px;top:546px;width:481px;height:4px;background:#b3c4cb"></div>
<div style="left:1781px;top:247px;width:9px;height:299px;background:#fff"></div>
<div style="left:1782.3px;top:247px;width:7px;height:173px;background:#b0b0b0;border-radius:3.5px"></div>
<div style="left:1309px;top:550px;width:481px;height:606px;background:#fff"></div>
<div style="left:1309px;top:550px;width:481px;height:31px;background:#e8e8e8"></div>
<div style="left:1421px;top:550px;width:1px;height:31px;background:#cdcdcd"></div>
<div style="left:1533px;top:550px;width:1px;height:31px;background:#cdcdcd"></div>
<div style="left:1646px;top:550px;width:1px;height:31px;background:#cdcdcd"></div>
<div style="left:1758px;top:550px;width:1px;height:31px;background:#cdcdcd"></div>
<div style="left:1309px;top:550px;width:112px;height:31px;background:#fff"></div>
<span class="t" style="top:557px;font-size:14px;line-height:16px;color:#5a5a5a;-webkit-text-stroke:0.7px #5a5a5a;left:1365.0px;transform:translateX(-50%);">Properties</span>
<span class="t" style="top:557px;font-size:14px;line-height:16px;color:#5a5a5a;-webkit-text-stroke:0.7px #5a5a5a;left:1477.0px;transform:translateX(-50%);">Events</span>
<span class="t" style="top:557px;font-size:14px;line-height:16px;color:#5a5a5a;-webkit-text-stroke:0.7px #5a5a5a;left:1589.5px;transform:translateX(-50%);">Artifacts</span>
<span class="t" style="top:557px;font-size:14px;line-height:16px;color:#5a5a5a;-webkit-text-stroke:0.7px #5a5a5a;left:1702.0px;transform:translateX(-50%);">Json</span>
<svg style="left:1764px;top:555px;" width="22" height="22" viewBox="0 0 24 24"><path fill="#666" d="M22 3.410L16.710 8.700 20 12h-8V4l3.290 3.290L20.590 2 22 3.410zM3.410 22l5.290-5.290L12 20v-8H4l3.290 3.290L2 20.590 3.410 22z"/></svg>
<div style="left:1309px;top:586px;width:481px;height:1px;background:#c8c8c8"></div>
<div style="left:1309px;top:587px;width:472px;height:511px;background:#e6e6e6"></div>
<svg style="left:1319.8px;top:597.3px;" width="5.6" height="9.4" viewBox="0 0 5.6 9.4"><path fill="#666" d="M0 0v9.4l5.6 -4.7z"/></svg>
<span class="t" style="top:594px;font-size:14px;line-height:16px;color:#5a5a5a;-webkit-text-stroke:0.5px #5a5a5a;left:1340.5px;">About</span>
<div style="left:1309px;top:616px;width:472px;height:1px;background:#c8c8c8"></div>
<svg style="left:1317.4px;top:629.85px;" width="9.6" height="5.1" viewBox="0 0 9.6 5.1"><path fill="#666" d="M0 0h9.6l-4.8 5.1z"/></svg>
<span class="t" style="top:624px;font-size:14px;line-height:16px;color:#5a5a5a;-webkit-text-stroke:0.5px #5a5a5a;left:1340.5px;">Meta Data</span>
<div style="left:1335px;top:649px;width:155px;height:28px;background:#f7f7f7"></div>
<div style="left:1492px;top:649px;width:285px;height:28px;background:#f7f7f7"></div>
<span class="t" style="top:656px;font-size:12px;line-height:14px;color:#111;letter-spacing:-0.08px;left:1345.5px;">Tag</span>
<div style="left:1494px;top:651px;width:281px;height:24px;box-sizing:border-box;border:1px solid #b4b4b4;border-radius:4px;background:#fff"></div>
<span class="t" style="top:656px;font-size:12px;line-height:14px;color:#111;letter-spacing:-0.08px;left:1501.5px;">create</span>
<div style="left:1335px;top:679px;width:155px;height:28px;background:#fff"></div>
<div style="left:1492px;top:679px;width:285px;height:28px;background:#fff"></div>
<span class="t" style="top:686px;font-size:12px;line-height:14px;color:#111;letter-spacing:-0.08px;left:1345.5px;">Permissions</span>
<span class="t" style="top:686px;font-size:12px;line-height:14px;color:#333;letter-spacing:-0.2px;left:1500.3px;">Role</span>
<svg style="left:1759.0px;top:691.0px;" width="10" height="5" viewBox="0 0 10 5"><path fill="#666" d="M0 0h10l-5.0 5z"/></svg>
<div style="left:1335px;top:709px;width:442px;height:37px;background:#f7f7f7"></div>
<div style="left:1342px;top:714px;width:428px;height:27px;box-sizing:border-box;border:1px solid #d2d2d2;border-radius:5px;background:#fff"></div>
<span class="t" style="top:720px;font-size:12px;line-height:14px;color:#3f48a8;letter-spacing:0.1px;-webkit-text-stroke:0.3px #3f48a8;left:1556px;transform:translateX(-50%);">Apply permissions to children</span>
<div style="left:1335px;top:748px;width:155px;height:24px;background:#fff"></div>
<div style="left:1492px;top:748px;width:285px;height:24px;background:#fff"></div>
<span class="t" style="top:753px;font-size:12px;line-height:14px;color:#111;letter-spacing:-0.08px;left:1345.5px;">Default Active</span>
<div style="left:1496px;top:752px;width:16px;height:16px;background:#0d6df2;border-radius:2.5px"></div>
<svg style="left:1496px;top:752px;" width="16" height="16" viewBox="0 0 16 16"><path d="M3.4 8.3 L6.5 11.4 L12.6 4.6" fill="none" stroke="#fff" stroke-width="2.1"/></svg>
<div style="left:1335px;top:776px;width:155px;height:23px;background:#f7f7f7"></div>
<div style="left:1492px;top:776px;width:285px;height:23px;background:#f7f7f7"></div>
<span class="t" style="top:779px;font-size:12px;line-height:14px;color:#111;letter-spacing:-0.08px;left:1345.5px;">Stop Propagation</span>
<div style="left:1496px;top:776px;width:16px;height:20px;box-sizing:border-box;border:1px solid #6e6e6e;border-top:none;background:#fbfbfb"></div>
<div style="left:1335px;top:800px;width:155px;height:28px;background:#fff"></div>
<div style="left:1492px;top:800px;width:285px;height:28px;background:#fff"></div>
<span class="t" style="top:807px;font-size:12px;line-height:14px;color:#111;letter-spacing:-0.08px;left:1345.5px;">On errors</span>
<div style="left:1335px;top:832px;width:155px;height:28px;background:#fff"></div>
<div style="left:1492px;top:832px;width:285px;height:28px;background:#fff"></div>
<span class="t" style="top:839px;font-size:12px;line-height:14px;color:#111;letter-spacing:-0.08px;left:1345.5px;">Schema</span>
<div style="left:1335px;top:862px;width:155px;height:28px;background:#f7f7f7"></div>
<div style="left:1492px;top:862px;width:285px;height:28px;background:#f7f7f7"></div>
<span class="t" style="top:869px;font-size:12px;line-height:14px;color:#111;letter-spacing:-0.08px;left:1345.5px;">Id Type</span>
<span class="t" style="top:869px;font-size:12px;line-height:14px;color:#333;letter-spacing:-0.2px;left:1500.3px;">Owner (Owner DID)</span>
<svg style="left:1759.0px;top:874.0px;" width="10" height="5" viewBox="0 0 10 5"><path fill="#666" d="M0 0h10l-5.0 5z"/></svg>
<div style="left:1335px;top:892px;width:155px;height:23px;background:#fff"></div>
<div style="left:1492px;top:892px;width:285px;height:23px;background:#fff"></div>
<span class="t" style="top:897px;font-size:12px;line-height:14px;color:#111;letter-spacing:-0.08px;left:1345.5px;">Preset</span>
<div style="left:1496px;top:896px;width:16px;height:16px;background:#0d6df2;border-radius:2.5px"></div>
<svg style="left:1496px;top:896px;" width="16" height="16" viewBox="0 0 16 16"><path d="M3.4 8.3 L6.5 11.4 L12.6 4.6" fill="none" stroke="#fff" stroke-width="2.1"/></svg>
<div style="left:1309px;top:915px;width:472px;height:1px;background:#c8c8c8"></div>
<svg style="left:1317.4px;top:928.85px;" width="9.6" height="5.1" viewBox="0 0 9.6 5.1"><path fill="#666" d="M0 0h9.6l-4.8 5.1z"/></svg>
<span class="t" style="top:923px;font-size:14px;line-height:16px;color:#5a5a5a;-webkit-text-stroke:0.5px #5a5a5a;left:1340.5px;">UI</span>
<div style="left:1335px;top:948px;width:155px;height:28px;background:#fff"></div>
<div style="left:1492px;top:948px;width:285px;height:28px;background:#fff"></div>
<span class="t" style="top:955px;font-size:12px;line-height:14px;color:#111;letter-spacing:-0.08px;left:1345.5px;">Type</span>
<span class="t" style="top:955px;font-size:12px;line-height:14px;color:#333;letter-spacing:-0.2px;left:1500.3px;">PAGE</span>
<svg style="left:1759.0px;top:960.0px;" width="10" height="5" viewBox="0 0 10 5"><path fill="#666" d="M0 0h10l-5.0 5z"/></svg>
<div style="left:1335px;top:978px;width:155px;height:28px;background:#f7f7f7"></div>
<div style="left:1492px;top:978px;width:285px;height:28px;background:#f7f7f7"></div>
<span class="t" style="top:985px;font-size:12px;line-height:14px;color:#111;letter-spacing:-0.08px;left:1345.5px;">Title</span>
<div style="left:1494px;top:980px;width:281px;height:24px;box-sizing:border-box;border:1px solid #b4b4b4;border-radius:4px;background:#fff"></div>
<span class="t" style="top:985px;font-size:12px;line-height:14px;color:#111;letter-spacing:-0.08px;left:1501.5px;">Registrant Application</span>
<div style="left:1335px;top:1008px;width:155px;height:27px;background:#fff"></div>
<div style="left:1492px;top:1008px;width:285px;height:27px;background:#fff"></div>
<span class="t" style="top:1015px;font-size:12px;line-height:14px;color:#111;letter-spacing:-0.08px;left:1345.5px;">Description</span>
<div style="left:1494px;top:1010px;width:281px;height:24px;box-sizing:border-box;border:1px solid #b4b4b4;border-radius:4px;background:#fff"></div>
<div style="left:1309px;top:1035px;width:472px;height:1px;background:#c8c8c8"></div>
<svg style="left:1317.4px;top:1048.8500000000001px;" width="9.6" height="5.1" viewBox="0 0 9.6 5.1"><path fill="#666" d="M0 0h9.6l-4.8 5.1z"/></svg>
<span class="t" style="top:1043px;font-size:14px;line-height:16px;color:#5a5a5a;-webkit-text-stroke:0.5px #5a5a5a;left:1340.5px;">Preset</span>
<div style="left:1335px;top:1068px;width:155px;height:28px;background:#fff"></div>
<div style="left:1492px;top:1068px;width:285px;height:28px;background:#fff"></div>
<span class="t" style="top:1075px;font-size:12px;line-height:14px;color:#111;letter-spacing:-0.08px;left:1345.5px;">Preset Schema</span>
<svg style="left:1759.0px;top:1080.0px;" width="10" height="5" viewBox="0 0 10 5"><path fill="#666" d="M0 0h10l-5.0 5z"/></svg>
<div style="left:1309px;top:1098px;width:472px;height:1px;background:#c8c8c8"></div>
<div style="left:1482px;top:792px;width:308px;height:72px;background:#fff;border-radius:4px;box-shadow:0 2px 6px rgba(0,0,0,.4)"></div>
<div style="left:1482px;top:828px;width:308px;height:36px;background:#e0e0e0;border-radius:0 0 4px 4px"></div>
<span class="t" style="top:839px;font-size:12px;line-height:14px;color:#444;letter-spacing:-0.1px;left:1498px;">Schema</span>
<div style="left:1277px;top:775px;width:530px;height:113px;box-sizing:border-box;border:5px solid #e81c24"></div>
</body></html>
